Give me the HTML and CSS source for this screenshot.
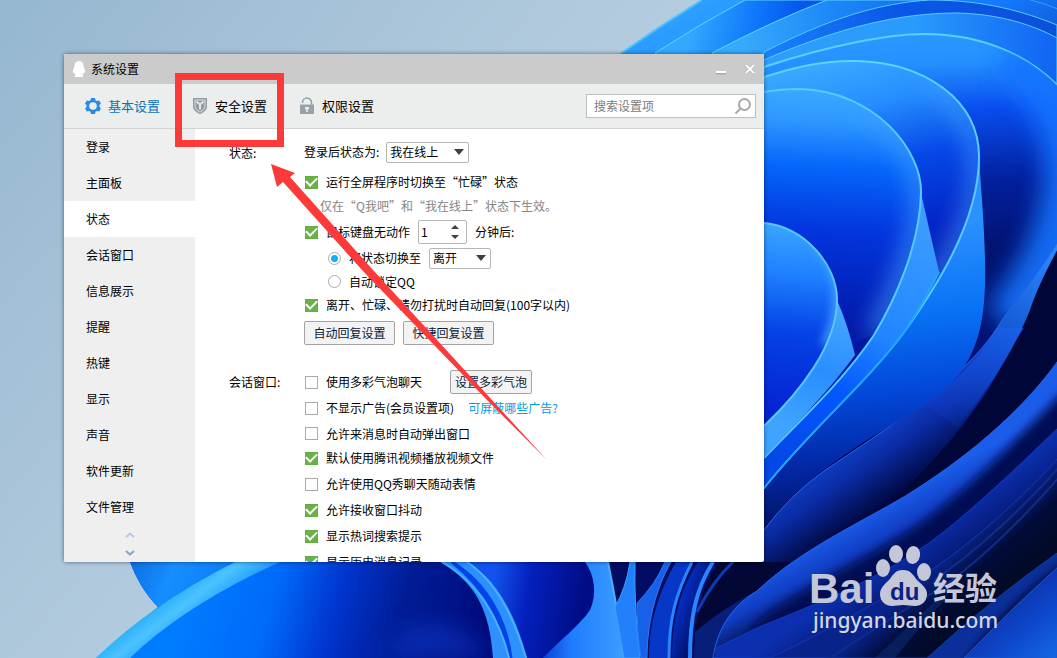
FILE: index.html
```html
<!DOCTYPE html>
<html lang="zh-CN">
<head>
<meta charset="utf-8">
<meta name="viewport" content="width=device-width, initial-scale=1">
<title>系统设置</title>
<link rel="stylesheet" href="styles.css">
</head>
<body>
<div class="desktop">
  <svg class="wallpaper" viewBox="0 0 1057 658" preserveAspectRatio="none" aria-hidden="true">
    <defs>
      <linearGradient id="sky" gradientUnits="userSpaceOnUse" x1="0" y1="0" x2="500" y2="400"><stop offset="0" stop-color="#95b7d0"/><stop offset=".5" stop-color="#a9c4d9"/><stop offset="1" stop-color="#bad0e2"/></linearGradient>
      <linearGradient id="base" gradientUnits="userSpaceOnUse" x1="640" y1="0" x2="940" y2="520"><stop offset="0" stop-color="#33a8ff"/><stop offset=".3" stop-color="#1479ff"/><stop offset=".7" stop-color="#020b5c"/><stop offset="1" stop-color="#00061f"/></linearGradient>
      <linearGradient id="topA" gradientUnits="userSpaceOnUse" x1="690" y1="30" x2="790" y2="50"><stop offset="0" stop-color="#33a8ff"/><stop offset=".6" stop-color="#0f78fb"/><stop offset="1" stop-color="#0657ee"/></linearGradient>
      <linearGradient id="topB" gradientUnits="userSpaceOnUse" x1="740" y1="30" x2="980" y2="0"><stop offset="0" stop-color="#36aafb"/><stop offset=".4" stop-color="#1c86f8"/><stop offset="1" stop-color="#0b60ee"/></linearGradient>
      <linearGradient id="topC" gradientUnits="userSpaceOnUse" x1="764" y1="50" x2="1057" y2="20"><stop offset="0" stop-color="#1a82fa"/><stop offset=".45" stop-color="#0a58e8"/><stop offset="1" stop-color="#0c50dc"/></linearGradient>
      <linearGradient id="topD" gradientUnits="userSpaceOnUse" x1="764" y1="60" x2="1057" y2="80"><stop offset="0" stop-color="#2f9dfa"/><stop offset=".5" stop-color="#299bfd"/><stop offset="1" stop-color="#1063f2"/></linearGradient>
      <linearGradient id="p4" gradientUnits="userSpaceOnUse" x1="960" y1="35" x2="975" y2="340"><stop offset="0" stop-color="#2a97ff"/><stop offset=".09" stop-color="#2490ff"/><stop offset=".24" stop-color="#0a4ef0"/><stop offset=".48" stop-color="#02209e"/><stop offset=".7" stop-color="#021373"/><stop offset="1" stop-color="#031272"/></linearGradient>
      <linearGradient id="p5" gradientUnits="userSpaceOnUse" x1="840" y1="60" x2="900" y2="300"><stop offset="0" stop-color="#3aa7ff"/><stop offset=".2" stop-color="#268fff"/><stop offset=".45" stop-color="#0648e8"/><stop offset=".75" stop-color="#0423c4"/><stop offset="1" stop-color="#0419a4"/></linearGradient>
      <linearGradient id="p6" gradientUnits="userSpaceOnUse" x1="810" y1="88" x2="800" y2="330"><stop offset="0" stop-color="#3ba8ff"/><stop offset=".13" stop-color="#2f99ff"/><stop offset=".32" stop-color="#0567fb"/><stop offset=".58" stop-color="#0336de"/><stop offset="1" stop-color="#0217a6"/></linearGradient>
      <linearGradient id="p7" gradientUnits="userSpaceOnUse" x1="790" y1="225" x2="775" y2="420"><stop offset="0" stop-color="#3aa5ff"/><stop offset=".25" stop-color="#1f80ff"/><stop offset=".55" stop-color="#0542e6"/><stop offset="1" stop-color="#0420cf"/></linearGradient>
      <linearGradient id="f5" gradientUnits="userSpaceOnUse" x1="870" y1="230" x2="900" y2="520"><stop offset="0" stop-color="#2c91ff"/><stop offset=".3" stop-color="#0873f5"/><stop offset=".55" stop-color="#0349da"/><stop offset=".8" stop-color="#0226a2"/><stop offset="1" stop-color="#01125f"/></linearGradient>
      <linearGradient id="f6" gradientUnits="userSpaceOnUse" x1="910" y1="210" x2="790" y2="460"><stop offset="0" stop-color="#3c9dff"/><stop offset=".45" stop-color="#2186ff"/><stop offset=".7" stop-color="#0458ff"/><stop offset="1" stop-color="#0448e9"/></linearGradient>
      <linearGradient id="f7" gradientUnits="userSpaceOnUse" x1="840" y1="310" x2="800" y2="430"><stop offset="0" stop-color="#46a6ff"/><stop offset=".5" stop-color="#2a8eff"/><stop offset="1" stop-color="#3fa4ff"/></linearGradient>
      <linearGradient id="f4" gradientUnits="userSpaceOnUse" x1="850" y1="435" x2="895" y2="500"><stop offset="0" stop-color="#1245d2"/><stop offset=".45" stop-color="#0a2ba3"/><stop offset="1" stop-color="#00063c"/></linearGradient>
      <linearGradient id="f4top" gradientUnits="userSpaceOnUse" x1="1040" y1="250" x2="930" y2="430"><stop offset="0" stop-color="#2a85fa"/><stop offset=".5" stop-color="#1457df" stop-opacity=".9"/><stop offset="1" stop-color="#1245d2" stop-opacity="0"/></linearGradient>
      <linearGradient id="g1" gradientUnits="userSpaceOnUse" x1="900" y1="495" x2="930" y2="550"><stop offset="0" stop-color="#1b5ce8"/><stop offset=".45" stop-color="#103ec4"/><stop offset="1" stop-color="#020738"/></linearGradient>
      <linearGradient id="g2" gradientUnits="userSpaceOnUse" x1="960" y1="505" x2="1000" y2="560"><stop offset="0" stop-color="#0b2fae"/><stop offset="1" stop-color="#020a4a"/></linearGradient>
      <linearGradient id="g3" gradientUnits="userSpaceOnUse" x1="960" y1="545" x2="1000" y2="590"><stop offset="0" stop-color="#08248a"/><stop offset=".5" stop-color="#020b38"/><stop offset="1" stop-color="#010a26"/></linearGradient>
      <linearGradient id="g4" gradientUnits="userSpaceOnUse" x1="1000" y1="610" x2="1050" y2="670"><stop offset="0" stop-color="#0b36b0"/><stop offset=".4" stop-color="#0d47cb"/><stop offset="1" stop-color="#166ee8"/></linearGradient>
      <linearGradient id="big" gradientUnits="userSpaceOnUse" x1="190" y1="580" x2="490" y2="660"><stop offset="0" stop-color="#007cff"/><stop offset=".28" stop-color="#0069fa"/><stop offset=".48" stop-color="#0035ce"/><stop offset=".68" stop-color="#001d96"/><stop offset="1" stop-color="#000878"/></linearGradient>
      <linearGradient id="rim" gradientUnits="userSpaceOnUse" x1="160" y1="600" x2="185" y2="633"><stop offset="0" stop-color="#25adfa"/><stop offset=".45" stop-color="#4cc3ff"/><stop offset="1" stop-color="#209bff"/></linearGradient>
      <linearGradient id="cup" gradientUnits="userSpaceOnUse" x1="130" y1="560" x2="230" y2="600"><stop offset="0" stop-color="#0b6de0"/><stop offset=".4" stop-color="#168eff"/><stop offset="1" stop-color="#087bf4"/></linearGradient>
      <linearGradient id="band" gradientUnits="userSpaceOnUse" x1="470" y1="560" x2="510" y2="658"><stop offset="0" stop-color="#2a8fff"/><stop offset="1" stop-color="#2f91ff"/></linearGradient>
      <linearGradient id="mid" gradientUnits="userSpaceOnUse" x1="490" y1="600" x2="580" y2="615"><stop offset="0" stop-color="#1352ec"/><stop offset=".4" stop-color="#0420bd"/><stop offset="1" stop-color="#000d86"/></linearGradient>
      <linearGradient id="cone" gradientUnits="userSpaceOnUse" x1="545" y1="0" x2="620" y2="0"><stop offset="0" stop-color="#0a46d8"/><stop offset=".35" stop-color="#1f7cff"/><stop offset="1" stop-color="#3a9cff"/></linearGradient>
      <linearGradient id="rib" gradientUnits="userSpaceOnUse" x1="675" y1="610" x2="705" y2="620"><stop offset="0" stop-color="#0430c8"/><stop offset="1" stop-color="#010c5a"/></linearGradient>
      <filter id="soft" x="-20%" y="-20%" width="140%" height="140%"><feGaussianBlur stdDeviation="5"/></filter>
      <filter id="soft2" x="-50%" y="-50%" width="200%" height="200%"><feGaussianBlur stdDeviation="12"/></filter>
      <clipPath id="c4"><path d="M764,67 C830,45 890,34 924,34 C985,34 1030,57 1060,88 V238 C1035,280 1015,300 997,328 L900,420Z"/></clipPath>
      <clipPath id="c5"><path d="M764,77 C800,65 830,60 857,61 C925,63 979,100 979,157 C979,225 930,295 907,328 L700,400Z"/></clipPath>
      <clipPath id="c6"><path d="M764,92 C780,89 790,89 800,89 C875,91 922,150 921,193 C920,245 895,300 874,335 L700,400Z"/></clipPath>
      <clipPath id="c7"><path d="M764,223 C805,227 837,265 837,300 C837,345 800,392 764,426Z"/></clipPath>
    </defs>
    <rect width="1057" height="658" fill="url(#sky)"/>
    <path d="M702,0 Q660,26 620,54 L400,300 L130,562 C136,578 145,594 158,607 L96,658 H1057 V0Z" fill="url(#base)"/>
    <path d="M702,0 Q660,26 620,54" fill="none" stroke="#4bc3ff" stroke-width="2"/>
    <path d="M745,0 Q700,24 655,53 L720,100 L900,0Z" fill="url(#topA)" stroke="#62d4ff"/>
    <path d="M827,0 Q770,22 712,53 L760,100 L950,0Z" fill="url(#topB)" stroke="#62d4ff"/>
    <path d="M764,52 C830,18 880,3 930,0 C985,0 1025,12 1057,25 V658 H700Z" fill="url(#topC)" stroke="#56c8ff"/>
    <path d="M1030,0 Q1045,3 1060,10" fill="none" stroke="#3c9cff"/>
    <path d="M764,60 C840,27 900,13 957,13 C1000,14 1033,25 1057,38 V658 H700Z" fill="url(#topD)" stroke="#56ccff"/>
    <path d="M764,67 C830,45 890,34 924,34 C985,34 1030,57 1060,88 V658 H700Z" fill="url(#p4)" stroke="#5bd0ff" stroke-width="2"/>
    <g clip-path="url(#c4)">
      <path d="M1010,50 Q1075,100 1072,170 Q1072,240 1010,325" fill="none" stroke="#1474ff" stroke-width="56" filter="url(#soft2)" opacity=".9"/>
    </g>
    <path d="M1060,238 C1035,280 1015,300 997,328 C960,385 890,420 824,471 L764,530 V658 H1057Z" fill="#000638"/>
    <path d="M997,328 C962,382 890,426 824,471 Q790,495 764,530 L740,620 C850,550 960,450 1004,361 Q1012,345 1024,328Z" fill="url(#f4)"/>
    <path d="M1060,238 C1035,280 1015,300 997,328 C975,365 950,387 925,404 L957,428 C1000,375 1018,340 1030,310 Q1038,285 1060,245Z" fill="url(#f4top)"/>
    <path d="M1060,238 C1035,280 1015,300 997,328 C962,382 890,426 824,471 Q790,495 764,530" fill="none" stroke="#266cf0" stroke-width="1"/>
    <path d="M764,77 C800,65 830,60 857,61 C925,63 979,100 979,157 C981,190 986,240 985,285 C983,350 965,385 900,420 C850,450 800,480 760,532 H700Z" fill="url(#f5)"/>
    <path d="M764,77 C800,65 830,60 857,61 C925,63 979,100 979,157 C979,225 930,295 907,328 C870,380 810,430 764,488 L700,500Z" fill="url(#p5)" stroke="#5fd2ff" stroke-width="2"/>
    <g clip-path="url(#c5)"><path d="M930,75 C970,110 984,150 977,190 C970,230 940,280 907,328" fill="none" stroke="#42a0ff" stroke-width="12" filter="url(#soft2)"/></g>
    <path d="M921,193 L939,272 Q925,300 907,328 C870,380 810,430 764,488 V458 L874,335Z" fill="url(#f6)"/>
    <path d="M939,272 Q925,300 907,328 C870,380 810,430 764,488" fill="none" stroke="#22a6ff" stroke-width="2"/>
    <path d="M764,92 C780,89 790,89 800,89 C875,91 922,150 921,193 C920,245 895,300 874,335 C840,385 800,420 764,458 L700,458 V92Z" fill="url(#p6)"/>
    <g clip-path="url(#c6)"><path d="M870,105 C915,145 926,180 921,213 C916,250 895,300 874,335" fill="none" stroke="#3f9cff" stroke-width="14" filter="url(#soft2)"/></g>
    <path d="M764,92 C780,89 790,89 800,89 C875,91 922,150 921,193 C920,245 895,300 874,335 C840,385 800,420 764,458" fill="none" stroke="#58caff" stroke-width="2"/>
    <path d="M837,300 Q848,325 855,355 C830,390 795,425 764,458 V426Z" fill="url(#f7)"/>
    <path d="M764,223 C805,227 837,265 837,300 C837,345 800,392 764,426Z" fill="url(#p7)"/>
    <g clip-path="url(#c7)"><path d="M815,240 C845,275 842,310 825,345" fill="none" stroke="#49a8ff" stroke-width="8" filter="url(#soft)"/></g>
    <path d="M764,223 C805,227 837,265 837,300 C837,345 800,392 764,426" fill="none" stroke="#5ac8ff" stroke-width="2"/>

    <path d="M130,562 C136,578 145,594 158,607 L240,562Z" fill="url(#cup)"/>
    <path d="M235,562 Q150,605 96,658 H300 V562Z" fill="url(#rim)"/>
    <path d="M280,562 Q185,605 130,658 H494 C494,620 475,580 440,562Z" fill="url(#big)"/>
    <path d="M365,658 Q395,648 408,628 Q450,610 494,658Z" fill="#0838c8" filter="url(#soft2)" opacity=".6"/>
    <path d="M467,562 C500,585 515,620 527,658 H624 V562Z" fill="url(#mid)"/>
    <path d="M440,562 C475,582 490,610 493,658 H527 C515,615 498,580 467,562Z" fill="url(#band)"/>
    <path d="M452,562 C490,585 507,625 511,658 C505,642 500,600 452,562Z" fill="#0442ea" stroke="#0442ea" stroke-width="3"/>
    <path d="M442,562 C478,582 500,620 509,658 M467,562 C497,582 515,620 526,658" fill="none" stroke="#48b2ff" stroke-width="2"/>
    <path d="M608,562 H800 L757,591 L713,658 H624Z" fill="#010c62"/>
    <path d="M585,562 C595,575 597,595 590,610 C580,625 560,640 543,658 H624 Q618,610 608,562Z" fill="url(#cone)"/>
    <path d="M608,562 Q618,610 624,658" fill="none" stroke="#50acff" stroke-width="2"/>
    <path d="M630,562 Q626,588 615,607 L624,658 H640 Q634,610 635,562Z" fill="#2280fb" stroke="#3d9dff"/>
    <path d="M665,562 Q655,585 637,603 Q637,635 641,658 H647 C647,625 655,590 671,562Z" fill="#1760e8" stroke="#2c7ef6"/>
    <path d="M692,562 C675,595 669,620 669,658 H649 C649,620 660,590 676,562Z" fill="#0637c6"/>
    <path d="M692,562 C675,595 669,620 669,658" fill="none" stroke="#2885ff" stroke-width="3"/>
    <path d="M713,562 C695,590 690,620 690,658 H672 C672,620 680,590 698,562Z" fill="url(#rib)"/>
    <path d="M713,562 C695,590 690,620 690,658" fill="none" stroke="#2887ff" stroke-width="4"/>
    <path d="M719,562 H790 L757,591 L713,658 H694 C694,620 700,590 719,562Z" fill="#020735"/>
    <path d="M733,562 Q712,582 697,612" fill="none" stroke="#0c3cb8" stroke-width="3"/>
    <path d="M757,591 Q720,610 695,632 L694,658 H720Z" fill="#0a2a96" opacity=".7"/>

    <path d="M1060,358 C1020,415 960,462 907,495 C860,523 800,550 757,591 C735,604 718,625 713,658 H1057Z" fill="url(#g1)" stroke="#2166ee"/>
    <path d="M1080,375 C1020,435 980,480 915,528 C860,564 800,590 757,622 L725,680 H1090Z" fill="#030c54" filter="url(#soft)"/>
    <path d="M1060,426 C1020,465 980,503 940,535 C880,580 820,602 757,628 L716,648 V658 H1057Z" fill="url(#g2)" stroke="#123bc6"/>
    <path d="M1060,456 C1020,500 970,545 924,575 C880,600 820,635 770,658 H1057Z" fill="url(#g3)" stroke="#1636b6"/>
    <path d="M1060,466 C1020,512 970,556 934,580 M1060,476 C1020,522 980,560 944,586 C900,612 860,638 830,658" fill="none" stroke="#132c8c" stroke-width="2"/>
    <path d="M938,598 Q910,625 875,658 H895 Q925,620 945,600Z" fill="#0c2b73" opacity=".6"/>
    <path d="M1060,551 Q990,600 927,658 H1057Z" fill="#0b2f9a" stroke="#123a9d"/>
    <path d="M1075,556 Q1005,602 962,668 H990 L1075,600Z" fill="#010a30" filter="url(#soft)"/>
    <path d="M1060,565 Q1010,610 964,658 H1057Z" fill="url(#g4)" stroke="#1b58c8"/>
  </svg>

  <main class="window">
    <header class="titlebar">
      <svg class="penguin" viewBox="0 0 14 18" aria-hidden="true"><path d="M7 1c3 0 4.500 2.200 4.500 5 .2 1.500 1.700 3.500 1.700 6 0 1-.6 1-1.400.2-.2 1.100-.7 2-1.400 2.700 1.800 1 1.200 2.100-.6 2.100H4.200c-1.800 0-2.400-1.100-.6-2.100-.7-.7-1.200-1.600-1.400-2.700-.8.8-1.400.8-1.400-.2 0-2.500 1.500-4.500 1.700-6C2.500 3.200 4 1 7 1Z"/></svg>
      <h1 class="title">系统设置</h1>
      <button class="window-button" aria-label="最小化"><svg viewBox="0 0 12 12"><path class="cap-shade" d="M1 10h10"/><path d="M1 9h10"/></svg></button>
      <button class="window-button" aria-label="关闭"><svg viewBox="0 0 12 12"><path class="cap-shade" d="M2 2l8 8M10 2l-8 8"/><path d="M2 2l8 8M10 2l-8 8"/></svg></button>
    </header>

    <div class="toolbar">
      <nav class="tabs">
        <button class="tab tab-active">
          <svg class="tab-icon" viewBox="0 0 16 18" aria-hidden="true"><path fill="#2a8be2" fill-rule="evenodd" d="M6 1h4l.5 2.300 1.500.8 2.200-.7 1.800 3.100L14.500 8v2l1.500 1.500-1.800 3.100-2.200-.7-1.500.8L10 17H6l-.5-2.300-1.500-.8-2.200.7L0 11.500 1.500 10V8L0 6.500l1.800-3.100 2.200.7 1.500-.8ZM8 5.200a3.800 3.800 0 1 0 0 7.600 3.800 3.800 0 0 0 0-7.600Z"/></svg>
          基本设置
        </button>
        <button class="tab">
          <svg class="tab-icon" viewBox="0 0 16 18" aria-hidden="true"><path fill="#939da3" d="M1 1h14v8.500c0 3.500-3 5.800-7 7.800-4-2-7-4.300-7-7.800Z"/><path fill="#939da3" stroke="#dde1e3" d="M3 3h10v6.200c0 2.600-2 4.200-5 5.900-3-1.700-5-3.300-5-5.900Z"/><path fill="none" stroke="#e0e4e6" stroke-width="2" d="M4.500 4.500L8 7.500l3.500-3M8 7v5.500"/></svg>
          安全设置
        </button>
        <button class="tab">
          <svg class="tab-icon" viewBox="0 0 16 18" aria-hidden="true"><path fill="none" stroke="#98a1a7" stroke-width="1.600" d="M3.500 6V5.500a4.500 4.500 0 0 1 9 0V7.500"/><path fill="#98a1a7" d="M1 7.500h14V17H1z"/><path fill="#eceeee" d="M6 10h4v2.200H8.800V15H7.200v-2.800H6z"/></svg>
          权限设置
        </button>
      </nav>
      <label class="search">
        <input type="text" placeholder="搜索设置项" aria-label="搜索设置项">
        <svg viewBox="0 0 18 18" aria-hidden="true"><circle cx="10.500" cy="7.500" r="5.500"/><path d="M6.500 11.500L1.500 16.500"/></svg>
      </label>
    </div>

    <div class="body">
      <nav class="sidebar">
        <ul class="menu">
          <li><a href="#login">登录</a></li>
          <li><a href="#panel">主面板</a></li>
          <li><a class="current" href="#status">状态</a></li>
          <li><a href="#chat">会话窗口</a></li>
          <li><a href="#info">信息展示</a></li>
          <li><a href="#remind">提醒</a></li>
          <li><a href="#hotkey">热键</a></li>
          <li><a href="#display">显示</a></li>
          <li><a href="#sound">声音</a></li>
          <li><a href="#update">软件更新</a></li>
          <li><a href="#files">文件管理</a></li>
        </ul>
        <div class="scrollers">
          <button class="scroller scroller-off" aria-label="向上"><svg viewBox="0 0 10 6"><path d="M1 5l4-3.500L9 5"/></svg></button>
          <button class="scroller" aria-label="向下"><svg viewBox="0 0 10 6"><path d="M1 1l4 3.500L9 1"/></svg></button>
        </div>
      </nav>

      <div class="content">
        <section class="group" id="status">
          <h2 class="group-title">状态:</h2>
          <div class="rows">
            <div class="row row-first">
              <label for="login-state">登录后状态为:</label>
              <span class="select"><select id="login-state"><option>我在线上</option></select></span>
            </div>
            <label class="row row-gap"><input type="checkbox" checked>运行全屏程序时切换至“忙碌”状态</label>
            <p class="row hint">仅在“Q我吧”和“我在线上”状态下生效。</p>
            <div class="row row-tall">
              <label class="choice"><input type="checkbox" checked>鼠标键盘无动作</label>
              <span class="spinner">
                <input type="text" value="1" aria-label="分钟">
                <span class="steps"><button class="step step-up" aria-label="增加"></button><button class="step step-down" aria-label="减少"></button></span>
              </span>
              <span>分钟后:</span>
            </div>
            <div class="row nested">
              <label class="choice"><input type="radio" name="idle" checked>将状态切换至</label>
              <span class="select select-small"><select aria-label="切换状态"><option>离开</option></select></span>
            </div>
            <label class="row nested nested-last"><input type="radio" name="idle">自动锁定QQ</label>
            <label class="row"><input type="checkbox" checked>离开、忙碌、请勿打扰时自动回复(100字以内)</label>
            <div class="row actions">
              <button class="button">自动回复设置</button>
              <button class="button">快捷回复设置</button>
            </div>
          </div>
        </section>

        <section class="group" id="chat">
          <h2 class="group-title">会话窗口:</h2>
          <div class="rows rows-wide">
            <div class="row row-bubble">
              <label class="choice"><input type="checkbox">使用多彩气泡聊天</label>
              <button class="button button-tight">设置多彩气泡</button>
            </div>
            <div class="row row-ads">
              <label class="choice"><input type="checkbox">不显示广告(会员设置项)</label>
              <a class="link" href="#ads">可屏蔽哪些广告?</a>
            </div>
            <label class="row row-popup"><input type="checkbox">允许来消息时自动弹出窗口</label>
            <label class="row"><input type="checkbox" checked>默认使用腾讯视频播放视频文件</label>
            <label class="row"><input type="checkbox">允许使用QQ秀聊天随动表情</label>
            <label class="row"><input type="checkbox" checked>允许接收窗口抖动</label>
            <label class="row"><input type="checkbox" checked>显示热词搜索提示</label>
            <label class="row"><input type="checkbox" checked>显示历史消息记录</label>
          </div>
        </section>
      </div>
    </div>
  </main>

  <svg class="watermark" viewBox="0 0 200 110" role="img" aria-label="Baidu 经验">
    <g fill="#c3c7d8">
      <text class="wm-bai" x="1" y="73">Bai</text>
      <ellipse cx="75" cy="38" rx="7" ry="9"/>
      <ellipse cx="88" cy="24" rx="7" ry="9"/>
      <ellipse cx="105" cy="25" rx="7" ry="9" transform="rotate(10 105 25)"/>
      <ellipse cx="116" cy="42" rx="7" ry="9"/>
      <path d="M95 40c8 0 10 5 14 10 4 4 10 8 10 14 0 8-6 12-12 12-4 0-8-1-12-1s-7 1-11 1c-6 0-12-4-12-12 0-6 5-10 9-14 4-5 6-10 14-10Z"/>
      <text class="wm-du" x="82" y="70">du</text>
      <text class="wm-cn" x="125" y="70">经验</text>
    </g>
    <text class="wm-url" x="5" y="98">jingyan.baidu.com</text>
  </svg>

  <svg class="annotation" viewBox="0 0 1057 658" preserveAspectRatio="none" aria-hidden="true">
    <rect x="178.500" y="76.500" width="102" height="67" fill="none" stroke="#fc3a3a" stroke-width="7"/>
    <path d="M271 164L295 173L290 177L373 270L492 400L547 460L487 400L362 270L283 182L277 187Z" fill="#fc3a3a"/>
  </svg>
</div>
</body>
</html>
```
FILE: styles.css
```css
* {
  box-sizing: border-box;
}

body {
  margin: 0;
  color: #000;
  font-family: "Noto Sans CJK SC", "Liberation Sans", sans-serif;
  font-size: 12px;
  line-height: 18px;
}

button,
input,
select {
  margin: 0;
  font: inherit;
  color: inherit;
}

button {
  padding: 0;
  border: 0;
  background: none;
}

.desktop {
  position: relative;
  display: flex;
  height: 100vh;
  padding: 54px 293px 96px 64px;
  overflow: hidden;
}

.wallpaper,
.annotation {
  position: absolute;
  top: 0;
  left: 0;
  width: 100%;
  height: 100%;
}

.annotation {
  pointer-events: none;
}

.window {
  position: relative;
  display: flex;
  flex: 1;
  flex-direction: column;
  min-width: 0;
  overflow: hidden;
  border-radius: 2px;
  background: #fff;
  box-shadow: 0 0 4px rgba(0, 0, 0, 0.5);
}

.titlebar {
  display: flex;
  flex: none;
  align-items: center;
  height: 30px;
  padding: 0 8px;
  background: #cbcbcb;
}

.penguin {
  width: 14px;
  height: 18px;
  margin-right: 5px;
  fill: #fff;
}

.title {
  flex: 1;
  margin: 0;
  font-size: 12px;
  font-weight: 400;
}

.window-button {
  display: flex;
  width: 12px;
  height: 12px;
  margin-left: 17px;
}

.window-button svg {
  width: 12px;
  height: 12px;
  fill: none;
  stroke: #fff;
  stroke-width: 2;
}

.window-button .cap-shade {
  stroke: #aaa;
  stroke-width: 3;
}

.toolbar {
  display: flex;
  flex: none;
  align-items: center;
  justify-content: space-between;
  height: 45px;
  padding: 0 8px 0 21px;
  border-bottom: 1px solid #d2d4d4;
  background: #eceeee;
}

.tabs {
  display: flex;
  gap: 32px;
}

.tab {
  display: flex;
  align-items: center;
  gap: 7px;
  font-size: 13px;
  line-height: 20px;
}

.tab-active {
  color: #0e72b8;
}

.tab-icon {
  width: 16px;
  height: 18px;
}

.search {
  display: flex;
  align-items: center;
  width: 170px;
  height: 24px;
  padding: 0 3px 0 7px;
  border: 1px solid #bdbfbf;
  background: #fff;
}

.search input {
  flex: 1;
  min-width: 0;
  padding: 0;
  border: 0;
  outline: 0;
  background: none;
}

.search input::placeholder {
  color: #7b7b7b;
}

.search svg {
  width: 18px;
  height: 18px;
  fill: none;
  stroke: #a8a8a8;
  stroke-width: 2;
}

.body {
  display: flex;
  flex: 1;
  min-height: 0;
}

.sidebar {
  flex: none;
  width: 131px;
  background: #efefef;
}

.menu {
  margin: 0;
  padding: 0;
  list-style: none;
}

.menu a {
  display: block;
  padding-left: 22px;
  color: #000;
  line-height: 36px;
  text-decoration: none;
}

.menu .current {
  background: #fff;
}

.scrollers {
  display: flex;
  flex-direction: column;
  align-items: center;
  gap: 12px;
  padding-top: 7px;
}

.scroller,
.scroller svg {
  display: block;
  width: 10px;
  height: 6px;
}

.scroller svg {
  fill: none;
  stroke: #7fa3cf;
  stroke-width: 2;
}

.scroller-off svg {
  stroke: #b9c9e2;
}

.content {
  flex: 1;
  min-width: 0;
  padding: 12px 0 0 34px;
  overflow: hidden;
}

.group {
  display: grid;
  grid-template-columns: 75px 1fr;
  margin-bottom: 25px;
}

.group-title {
  margin: 0;
  font-size: 12px;
  font-weight: 400;
  line-height: 24px;
}

.rows {
  display: flex;
  flex-direction: column;
}

.row {
  display: flex;
  flex: none;
  align-items: center;
  height: 24px;
  margin: 0;
  white-space: nowrap;
}

.rows-wide .row {
  height: 26px;
}

.rows-wide .row-bubble {
  height: 24px;
  gap: 28px;
}

.rows-wide .row-ads {
  height: 28px;
  gap: 14px;
}

.rows-wide .row-popup {
  height: 23px;
}

.row-first {
  gap: 7px;
  height: 22px;
}

.row-gap {
  margin-top: 7px;
}

.row-tall {
  gap: 8px;
  height: 28px;
}

.nested {
  gap: 8px;
  padding-left: 24px;
}

.nested-last {
  gap: 0;
  height: 23px;
}

.hint {
  padding-left: 16px;
  color: #858585;
}

.choice {
  display: flex;
  align-items: center;
}

.actions {
  gap: 8px;
  margin-top: 4px;
}

input[type="checkbox"],
input[type="radio"] {
  display: grid;
  place-items: center;
  flex: none;
  width: 13px;
  height: 13px;
  margin: 0 8px 0 1px;
  border: 1px solid #aaa;
  background: #fff;
  appearance: none;
}

input[type="checkbox"]:checked {
  border-color: #64ac45;
  background: #68b346;
}

input[type="checkbox"]:checked::before {
  width: 9px;
  height: 5px;
  margin-bottom: 3px;
  border: solid #fff;
  border-width: 0 0 2px 2px;
  content: "";
  transform: rotate(-45deg);
}

input[type="radio"] {
  margin: 0 8px 0 0;
  border-radius: 50%;
}

input[type="radio"]:checked::before {
  width: 7px;
  height: 7px;
  border-radius: 50%;
  background: #12b0f5;
  content: "";
}

.select {
  position: relative;
  width: 83px;
  height: 21px;
}

.select-small {
  width: 62px;
}

.select select {
  width: 100%;
  height: 100%;
  padding: 0 3px;
  border: 1px solid #b5b5b5;
  border-radius: 2px;
  background: #fff;
  line-height: 18px;
  appearance: none;
}

.select::after {
  position: absolute;
  top: 7px;
  right: 5px;
  border: 5px solid transparent;
  border-top: 6px solid #404040;
  border-bottom: 0;
  content: "";
  pointer-events: none;
}

.spinner {
  display: flex;
  width: 49px;
  height: 24px;
  border: 1px solid #b5b5b5;
  border-radius: 2px;
  background: #fff;
}

.spinner input {
  flex: 1;
  min-width: 0;
  padding: 0 2px;
  border: 0;
  outline: 0;
  background: none;
}

.steps {
  display: flex;
  flex-direction: column;
  justify-content: center;
  gap: 6px;
  padding-right: 7px;
}

.step {
  width: 8px;
  height: 4px;
  background: #404040;
}

.step-up {
  clip-path: polygon(50% 0, 100% 100%, 0 100%);
}

.step-down {
  clip-path: polygon(0 0, 100% 0, 50% 100%);
}

.button {
  min-width: 91px;
  height: 24px;
  border: 1px solid #a3a3a3;
  border-radius: 2px;
  background: #f3f3f3;
  color: #0c2138;
}

.button-tight {
  min-width: 82px;
}

.link {
  color: #0c9ade;
  text-decoration: none;
}

.watermark {
  position: absolute;
  right: 49px;
  bottom: 18px;
  width: 200px;
  height: 110px;
}

.wm-bai,
.wm-du {
  font-family: "Liberation Sans", sans-serif;
  font-weight: 700;
}

.wm-bai {
  font-size: 42px;
}

.wm-du {
  fill: #0b1f86;
  font-size: 24px;
}

.wm-cn {
  font-family: "Noto Sans CJK SC", sans-serif;
  font-size: 32px;
  font-weight: 700;
}

.wm-url {
  fill: #d3d6e2;
  font-family: "Noto Sans", sans-serif;
  font-size: 21px;
  font-weight: 500;
}
```
